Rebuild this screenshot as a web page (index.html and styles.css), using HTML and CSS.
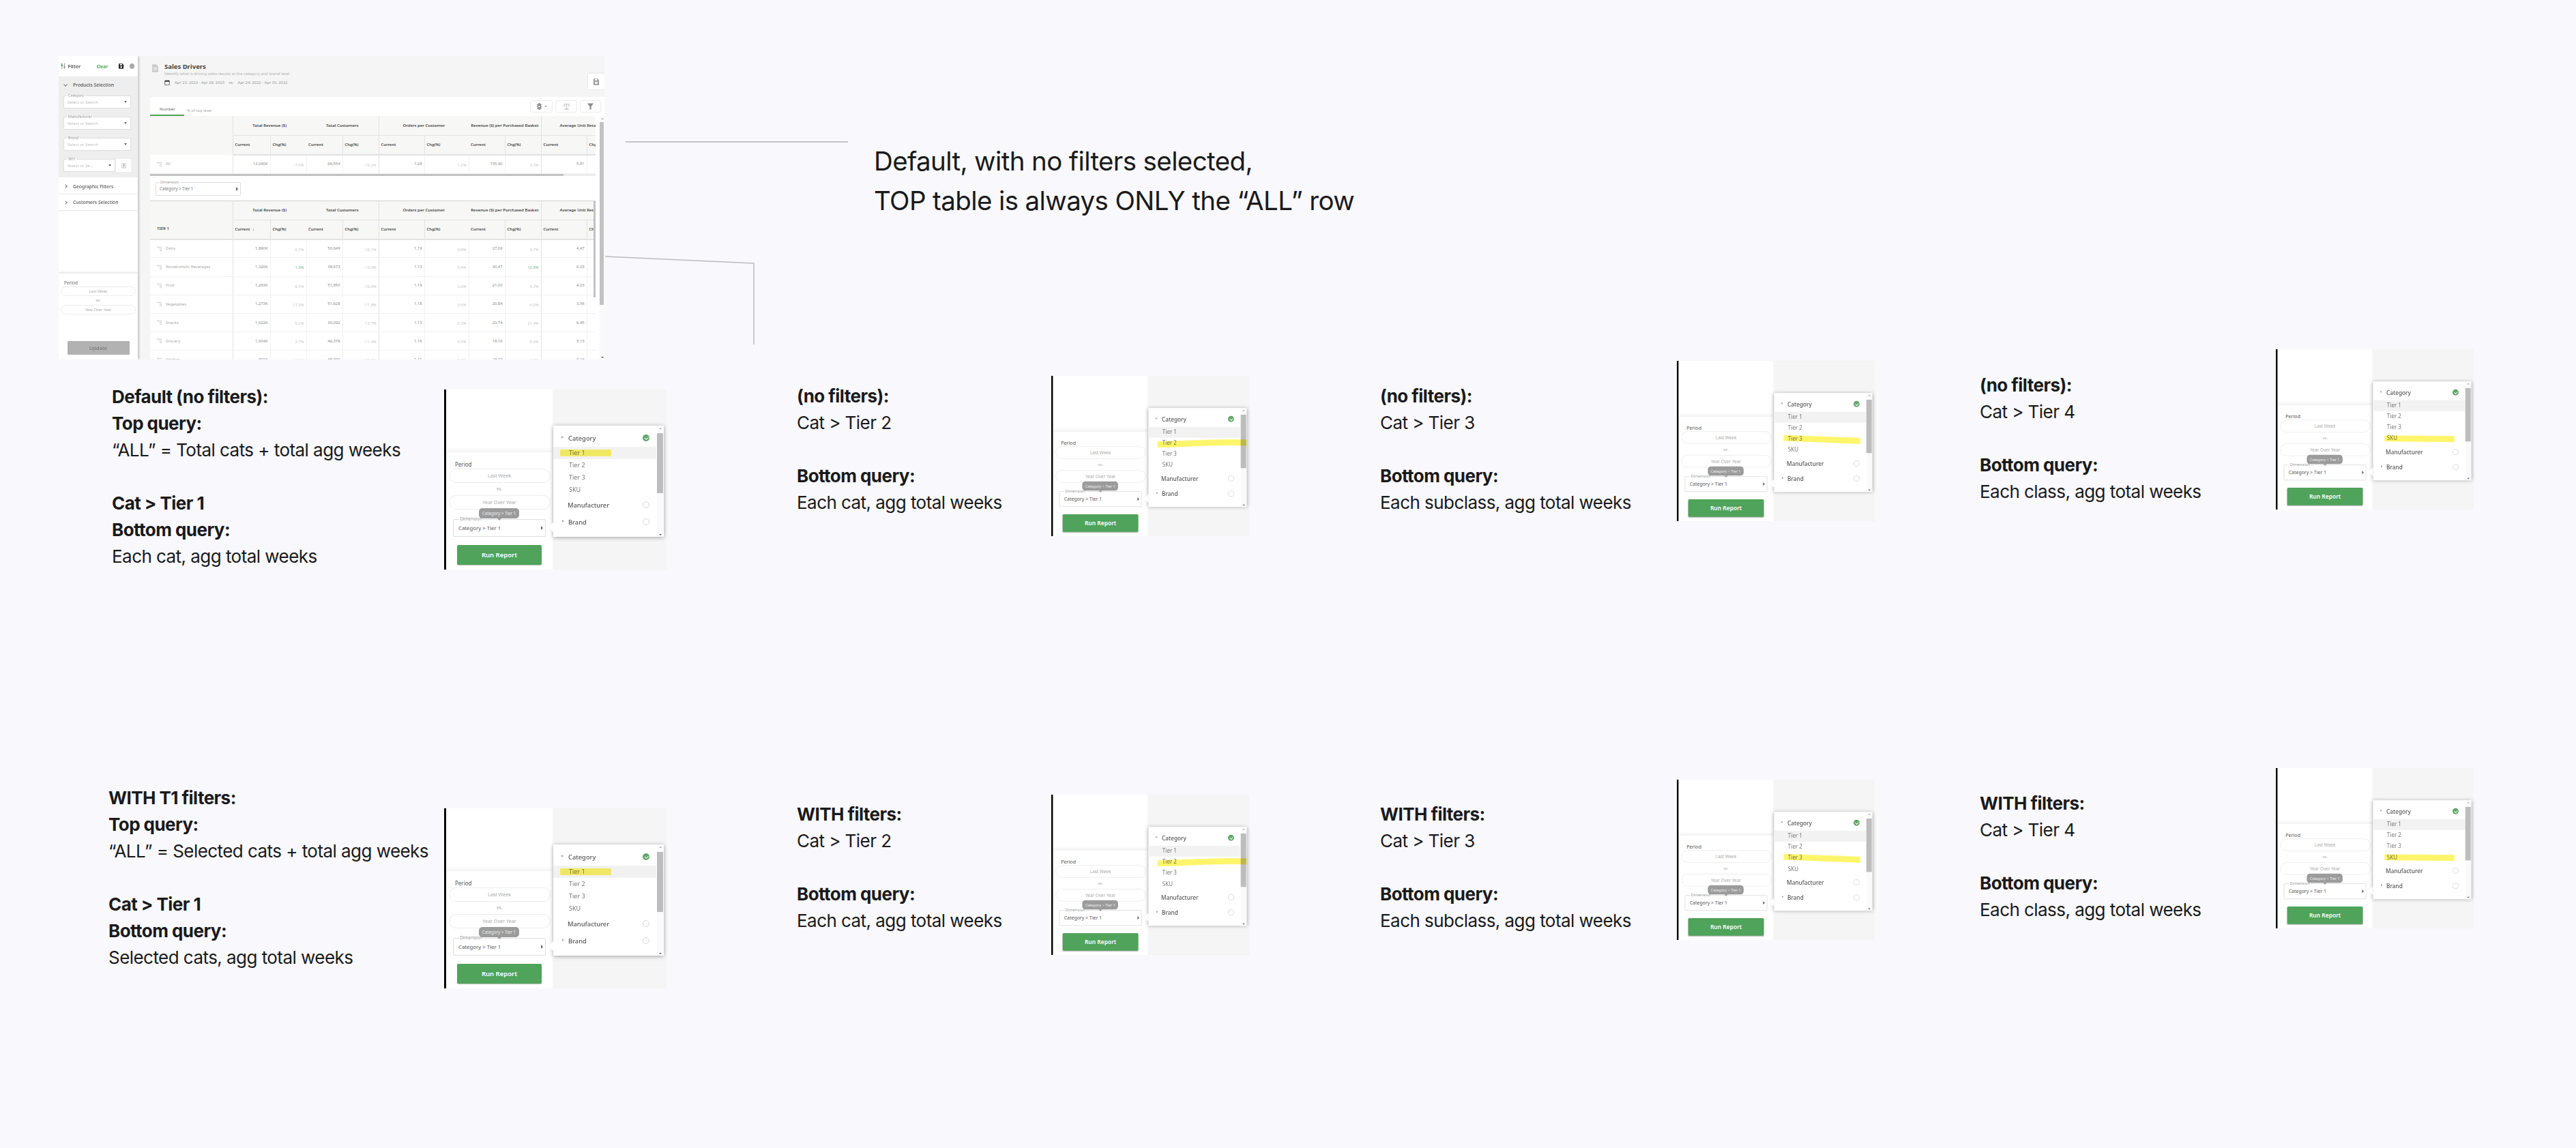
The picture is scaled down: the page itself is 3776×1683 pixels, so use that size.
FILE: index.html
```html
<!DOCTYPE html>
<html lang="en">
<head>
<meta charset="utf-8">
<title>Sales Drivers query notes</title>
<link rel="stylesheet" href="styles.css">
</head>
<body>
<svg class="sprite" width="0" height="0" aria-hidden="true">
  <symbol id="i-tree" viewBox="0 0 12 14"><g fill="#d4d4d4"><rect x="0" y="1" width="3" height="3"/><rect x="4" y="1" width="3" height="3"/><rect x="9" y="1" width="3" height="3"/><rect x="9" y="6" width="3" height="3"/><rect x="9" y="10" width="3" height="3"/></g><path d="M7 3h2M7.500 3v8.500H9M7.500 7.500H9" stroke="#d4d4d4" fill="none"/></symbol>
  <symbol id="i-sliders" viewBox="0 0 12 14"><path d="M3 0v14M9 0v14M0 5h6M6 9h6M0 2h2" stroke="#555" fill="none"/><rect x="1.500" y="3.500" width="3" height="3" fill="#4fa35a"/></symbol>
  <symbol id="i-save" viewBox="0 0 12 12"><path d="M0 1a1 1 0 0 1 1-1h8l3 3v8a1 1 0 0 1-1 1H1a1 1 0 0 1-1-1z" fill="#222"/><rect x="3" y="1" width="5" height="3" fill="#fff"/><circle cx="6" cy="8" r="2" fill="#fff"/></symbol>
  <symbol id="i-doc" viewBox="0 0 12 15"><path d="M0 0h8l4 4v11H0z" fill="#c9c9c9"/><path d="M2 6h8M2 8.500h8M2 11h8" stroke="#fff"/></symbol>
  <symbol id="i-cal" viewBox="0 0 12 12"><path d="M1 2.500h10v9H1z" fill="none" stroke="#222"/><path d="M1 2h10v2H1zM3 0h1v2H3zM8 0h1v2H8z" fill="#222"/></symbol>
  <symbol id="i-gear" viewBox="0 0 12 14"><path d="M4.500 0h3v2.500l2-1 1.500 2-2 1.500 2 1.500v1l-2 1.500 2 1.500-1.500 2-2-1V14h-3v-2.500l-2 1L1 10.500 3 9 1 7.500v-1L3 5 1 3.500l1.500-2 2 1z" fill="#8b8b8b"/><circle cx="6" cy="7" r="1.800" fill="#fff"/></symbol>
  <symbol id="i-scale" viewBox="0 0 14 14"><path d="M7 0v12M1 2h12M3 12h8M1 13.500h12" stroke="#aaa" fill="none"/><path d="M2 2 0 7h4zM12 2l-2 5h4z" fill="none" stroke="#aaa" stroke-width=".7"/></symbol>
  <symbol id="i-funnel" viewBox="0 0 12 12"><path d="M0 0h12L7.500 6v6h-3V6z" fill="#8b8b8b"/></symbol>
  <symbol id="i-export" viewBox="0 0 12 12"><path d="M.500.500h11v11H.500z" fill="none" stroke="#aaa"/><path d="M4 2h4v5H4z" fill="#aaa"/><path d="M2 9h8" stroke="#aaa"/></symbol>
  <symbol id="i-floppy" viewBox="0 0 12 14"><path d="M0 0h9l3 3v11H0z" fill="#9a9a9a"/><rect x="3" y="1" width="5" height="3" fill="#fff"/><rect x="3" y="7" width="6" height="4" fill="#fff"/></symbol>
</svg>

<main class="canvas">
  <section class="shot shot-main">
    <aside class="side">
      <header class="side-head">
        <svg class="ic-sliders"><use href="#i-sliders"/></svg>
        <span class="side-title">Filter</span>
        <span class="side-clear">Clear</span>
        <svg class="ic-save"><use href="#i-save"/></svg>
        <span class="dot"></span>
      </header>
      <div class="side-group">
        <div class="side-row"><span class="chev chev-down"></span>Products Selection</div>
        <div class="fields">
          <div class="field"><span class="legend">Category</span><span class="ph">Select or Search</span><span class="tri"></span></div>
          <div class="field"><span class="legend">Manufacturer</span><span class="ph">Select or Search</span><span class="tri"></span></div>
          <div class="field"><span class="legend">Brand</span><span class="ph">Select or Search</span><span class="tri"></span></div>
          <div class="field-pair">
            <div class="field"><span class="legend">SKU</span><span class="ph">Select or Se...</span><span class="tri"></span></div>
            <div class="field-btn"><svg class="ic-export"><use href="#i-export"/></svg></div>
          </div>
        </div>
      </div>
      <div class="side-row side-card side-geo"><span class="chev"></span>Geographic Filters</div>
      <div class="side-row side-card"><span class="chev"></span>Customers Selection</div>
      <div class="side-foot">
        <div class="period">Period</div>
        <div class="pill">Last Week</div>
        <div class="vs">vs.</div>
        <div class="pill">Year Over Year</div>
        <button class="update">Update</button>
      </div>
    </aside>
    <div class="content">
      <header class="page-head">
        <svg class="ic-doc"><use href="#i-doc"/></svg>
        <div class="page-meta">
          <h1>Sales Drivers</h1>
          <p class="page-sub">Identify what is driving sales results at the category and brand level</p>
          <p class="page-dates"><svg class="ic-cal"><use href="#i-cal"/></svg><span>Apr 23, 2023 - Apr 29, 2023</span><span>vs.</span><span>Apr 24, 2022 - Apr 30, 2022</span></p>
        </div>
        <div class="page-save"><svg class="ic-floppy"><use href="#i-floppy"/></svg></div>
      </header>
      <div class="card">
        <div class="tabbar">
          <span class="tab tab-on">Number</span>
          <span class="tab">% of top level</span>
          <div class="tools">
            <span class="tool tool-gear"><svg class="ic-tool"><use href="#i-gear"/></svg><i class="mini-caret"></i></span>
            <span class="tool"><svg class="ic-tool"><use href="#i-scale"/></svg></span>
            <span class="tool tool-f"><svg class="ic-tool"><use href="#i-funnel"/></svg></span>
          </div>
        </div>
        <div class="card-body">
          <div class="tables">
            <table class="grid">
              <colgroup><col class="c0"><col class="c1"><col class="c2"><col class="c2"><col class="c2"><col class="c3"><col class="c4"><col class="c2"><col class="c2"><col class="c3"><col class="c5"></colgroup>
              <thead>
                <tr class="h1"><th rowspan="2"></th><th colspan="2" class="bl">Total Revenue ($)</th><th colspan="2">Total Customers</th><th colspan="2" class="bl">Orders per Customer</th><th colspan="2">Revenue ($) per Purchased Basket</th><th colspan="2" class="bl aur">Average Unit Retail</th></tr>
                <tr class="h2"><th class="bl">Current</th><th class="bl">Chg(%)</th><th>Current</th><th class="bl">Chg(%)</th><th class="bl">Current</th><th class="bl">Chg(%)</th><th>Current</th><th class="bl">Chg(%)</th><th class="bl">Current</th><th class="bl">Chg</th></tr>
              </thead>
              <tbody>
                <tr><td class="nm"><svg class="ic-tree"><use href="#i-tree"/></svg>All</td><td>13,040K</td><td class="chg">-7.0%</td><td>66,554</td><td class="chg">-18.2%</td><td>1.28</td><td class="chg">1.2%</td><td>155.90</td><td class="chg">3.3%</td><td>5.81</td><td></td></tr>
              </tbody>
            </table>
            <div class="hscroll"><span></span></div>
            <div class="dim-area">
              <div class="dim-field"><span class="legend legend-w">Dimension</span>Category &gt; Tier 1<i class="tri-r"></i></div>
            </div>
            <div class="table2">
              <table class="grid">
                <colgroup><col class="c0"><col class="c1"><col class="c2"><col class="c2"><col class="c2"><col class="c3"><col class="c4"><col class="c2"><col class="c2"><col class="c3"><col class="c5"></colgroup>
                <thead>
                  <tr class="h1"><th rowspan="2" class="tier">TIER 1</th><th colspan="2" class="bl">Total Revenue ($)</th><th colspan="2">Total Customers</th><th colspan="2" class="bl">Orders per Customer</th><th colspan="2">Revenue ($) per Purchased Basket</th><th colspan="2" class="bl aur">Average Unit Retail</th></tr>
                  <tr class="h2"><th class="bl">Current <span class="sort">↓</span></th><th class="bl">Chg(%)</th><th>Current</th><th class="bl">Chg(%)</th><th class="bl">Current</th><th class="bl">Chg(%)</th><th>Current</th><th class="bl">Chg(%)</th><th class="bl">Current</th><th class="bl">Chg</th></tr>
                </thead>
                <tbody>
                  <tr><td class="nm"><svg class="ic-tree"><use href="#i-tree"/></svg>Dairy</td><td>1,890K</td><td class="chg">-0.7%</td><td>50,649</td><td class="chg">-16.1%</td><td>1.19</td><td class="chg">0.8%</td><td>27.09</td><td class="chg">9.7%</td><td>4.47</td><td></td></tr>
                  <tr><td class="nm"><svg class="ic-tree"><use href="#i-tree"/></svg>Nonalcoholic Beverages</td><td>1,320K</td><td class="chg up">1.9%</td><td>38,673</td><td class="chg">-13.0%</td><td>1.13</td><td class="chg">0.4%</td><td>30.47</td><td class="chg up">12.8%</td><td>6.03</td><td></td></tr>
                  <tr><td class="nm"><svg class="ic-tree"><use href="#i-tree"/></svg>Fruit</td><td>1,293K</td><td class="chg">-9.5%</td><td>51,950</td><td class="chg">-18.6%</td><td>1.19</td><td class="chg">0.8%</td><td>21.00</td><td class="chg">8.3%</td><td>4.03</td><td></td></tr>
                  <tr><td class="nm"><svg class="ic-tree"><use href="#i-tree"/></svg>Vegetables</td><td>1,273K</td><td class="chg">17.3%</td><td>51,628</td><td class="chg">-11.8%</td><td>1.18</td><td class="chg">0.6%</td><td>20.84</td><td class="chg">6.0%</td><td>3.56</td><td></td></tr>
                  <tr><td class="nm"><svg class="ic-tree"><use href="#i-tree"/></svg>Snacks</td><td>1,022K</td><td class="chg">5.2%</td><td>30,092</td><td class="chg">-13.7%</td><td>1.13</td><td class="chg">0.3%</td><td>23.74</td><td class="chg">21.4%</td><td>6.45</td><td></td></tr>
                  <tr><td class="nm"><svg class="ic-tree"><use href="#i-tree"/></svg>Grocery</td><td>1,004K</td><td class="chg">3.7%</td><td>46,378</td><td class="chg">-11.3%</td><td>1.16</td><td class="chg">0.5%</td><td>19.16</td><td class="chg">8.0%</td><td>5.13</td><td></td></tr>
                  <tr><td class="nm"><svg class="ic-tree"><use href="#i-tree"/></svg>Kitchen</td><td>991K</td><td class="chg">1.1%</td><td>35,090</td><td class="chg">-12.0%</td><td>1.11</td><td class="chg">0.2%</td><td>23.19</td><td class="chg">4.0%</td><td>9.23</td><td></td></tr>
                </tbody>
              </table>
              <div class="inner-scroll"></div>
            </div>
          </div>
          <div class="vscroll"><i class="arr-up"></i><span></span><i class="arr-down"></i></div>
        </div>
      </div>
    </div>
  </section>

  <div class="rule-h"></div>
  <svg class="rule-bent" width="222" height="132" viewBox="0 0 222 132"><path d="M0 1 218 11V130" fill="none" stroke="#bdbdbd" stroke-width="1.500"/></svg>

  <div class="caption">
    <p>Default, with no filters selected,</p>
    <p>TOP table is always ONLY the “ALL” row</p>
  </div>

  <div class="note n1"><p><strong>Default (no filters):</strong><br><strong>Top query:</strong><br>“ALL” = Total cats + total agg weeks</p><p><strong>Cat &gt; Tier 1</strong><br><strong>Bottom query:</strong><br>Each cat, agg total weeks</p></div>
  <div class="note n2"><p><strong>(no filters):</strong><br>Cat &gt; Tier 2</p><p><strong>Bottom query:</strong><br>Each cat, agg total weeks</p></div>
  <div class="note n3"><p><strong>(no filters):</strong><br>Cat &gt; Tier 3</p><p><strong>Bottom query:</strong><br>Each subclass, agg total weeks</p></div>
  <div class="note n4"><p><strong>(no filters):</strong><br>Cat &gt; Tier 4</p><p><strong>Bottom query:</strong><br>Each class, agg total weeks</p></div>
  <div class="note n5"><p><strong>WITH T1 filters:</strong><br><strong>Top query:</strong><br>“ALL” = Selected cats + total agg weeks</p><p><strong>Cat &gt; Tier 1</strong><br><strong>Bottom query:</strong><br>Selected cats, agg total weeks</p></div>
  <div class="note n6"><p><strong>WITH filters:</strong><br>Cat &gt; Tier 2</p><p><strong>Bottom query:</strong><br>Each cat, agg total weeks</p></div>
  <div class="note n7"><p><strong>WITH filters:</strong><br>Cat &gt; Tier 3</p><p><strong>Bottom query:</strong><br>Each subclass, agg total weeks</p></div>
  <div class="note n8"><p><strong>WITH filters:</strong><br>Cat &gt; Tier 4</p><p><strong>Bottom query:</strong><br>Each class, agg total weeks</p></div>

  <section class="shot thumb p1">
    <div class="t-left"><div class="t-panel"><div class="t-period">Period</div><div class="t-pill">Last Week</div><div class="t-vs">vs.</div><div class="t-pill">Year Over Year</div><div class="t-dim"><span class="t-legend">Dimension</span>Category &gt; Tier 1<i class="tri-r"></i></div><button class="t-run">Run Report</button></div></div>
    <div class="t-right"></div>
    <div class="t-tip">Category &gt; Tier 1</div>
    <div class="popup"><div class="p-head"><i class="p-open"></i><b>Category</b><span class="p-check"></span></div><div class="p-item p-cur">Tier 1</div><div class="p-item">Tier 2</div><div class="p-item">Tier 3</div><div class="p-item">SKU</div><div class="p-sec"><b>Manufacturer</b><span class="p-radio"></span></div><div class="p-sec p-brand"><i class="p-closed"></i><b>Brand</b><span class="p-radio"></span></div><div class="p-scroll"><i class="arr-up"></i><span></span><i class="arr-down"></i></div><span class="hl-t1"></span></div>
  </section>

  <section class="shot thumb thumb-sm p2">
    <div class="t-left"><div class="t-panel"><div class="t-period">Period</div><div class="t-pill">Last Week</div><div class="t-vs">vs.</div><div class="t-pill">Year Over Year</div><div class="t-dim"><span class="t-legend">Dimension</span>Category &gt; Tier 1<i class="tri-r"></i></div><button class="t-run">Run Report</button></div></div>
    <div class="t-right"></div>
    <div class="t-tip">Category &gt; Tier 1</div>
    <div class="popup"><div class="p-head"><i class="p-open"></i><b>Category</b><span class="p-check"></span></div><div class="p-item p-cur">Tier 1</div><div class="p-item">Tier 2</div><div class="p-item">Tier 3</div><div class="p-item">SKU</div><div class="p-sec"><b>Manufacturer</b><span class="p-radio"></span></div><div class="p-sec p-brand"><i class="p-closed"></i><b>Brand</b><span class="p-radio"></span></div><div class="p-scroll"><i class="arr-up"></i><span></span><i class="arr-down"></i></div><svg class="hl" viewBox="0 0 162 163"><path d="M15 60C60 60 100 55 162 57"/></svg></div>
  </section>

  <section class="shot thumb thumb-sm p3">
    <div class="t-left"><div class="t-panel"><div class="t-period">Period</div><div class="t-pill">Last Week</div><div class="t-vs">vs.</div><div class="t-pill">Year Over Year</div><div class="t-dim"><span class="t-legend">Dimension</span>Category &gt; Tier 1<i class="tri-r"></i></div><button class="t-run">Run Report</button></div></div>
    <div class="t-right"></div>
    <div class="t-tip">Category &gt; Tier 1</div>
    <div class="popup"><div class="p-head"><i class="p-open"></i><b>Category</b><span class="p-check"></span></div><div class="p-item p-cur">Tier 1</div><div class="p-item">Tier 2</div><div class="p-item">Tier 3</div><div class="p-item">SKU</div><div class="p-sec"><b>Manufacturer</b><span class="p-radio"></span></div><div class="p-sec p-brand"><i class="p-closed"></i><b>Brand</b><span class="p-radio"></span></div><div class="p-scroll"><i class="arr-up"></i><span></span><i class="arr-down"></i></div><svg class="hl" viewBox="0 0 162 163"><path d="M16 74 142 79"/></svg></div>
  </section>

  <section class="shot thumb thumb-sm p4">
    <div class="t-left"><div class="t-panel"><div class="t-period">Period</div><div class="t-pill">Last Week</div><div class="t-vs">vs.</div><div class="t-pill">Year Over Year</div><div class="t-dim"><span class="t-legend">Dimension</span>Category &gt; Tier 1<i class="tri-r"></i></div><button class="t-run">Run Report</button></div></div>
    <div class="t-right"></div>
    <div class="t-tip">Category &gt; Tier 1</div>
    <div class="popup"><div class="p-head"><i class="p-open"></i><b>Category</b><span class="p-check"></span></div><div class="p-item p-cur">Tier 1</div><div class="p-item">Tier 2</div><div class="p-item">Tier 3</div><div class="p-item">SKU</div><div class="p-sec"><b>Manufacturer</b><span class="p-radio"></span></div><div class="p-sec p-brand"><i class="p-closed"></i><b>Brand</b><span class="p-radio"></span></div><div class="p-scroll"><i class="arr-up"></i><span></span><i class="arr-down"></i></div><svg class="hl" viewBox="0 0 162 163"><path d="M19 94 134 95"/></svg></div>
  </section>

  <section class="shot thumb p5">
    <div class="t-left"><div class="t-panel"><div class="t-period">Period</div><div class="t-pill">Last Week</div><div class="t-vs">vs.</div><div class="t-pill">Year Over Year</div><div class="t-dim"><span class="t-legend">Dimension</span>Category &gt; Tier 1<i class="tri-r"></i></div><button class="t-run">Run Report</button></div></div>
    <div class="t-right"></div>
    <div class="t-tip">Category &gt; Tier 1</div>
    <div class="popup"><div class="p-head"><i class="p-open"></i><b>Category</b><span class="p-check"></span></div><div class="p-item p-cur">Tier 1</div><div class="p-item">Tier 2</div><div class="p-item">Tier 3</div><div class="p-item">SKU</div><div class="p-sec"><b>Manufacturer</b><span class="p-radio"></span></div><div class="p-sec p-brand"><i class="p-closed"></i><b>Brand</b><span class="p-radio"></span></div><div class="p-scroll"><i class="arr-up"></i><span></span><i class="arr-down"></i></div><span class="hl-t1"></span></div>
  </section>

  <section class="shot thumb thumb-sm p6">
    <div class="t-left"><div class="t-panel"><div class="t-period">Period</div><div class="t-pill">Last Week</div><div class="t-vs">vs.</div><div class="t-pill">Year Over Year</div><div class="t-dim"><span class="t-legend">Dimension</span>Category &gt; Tier 1<i class="tri-r"></i></div><button class="t-run">Run Report</button></div></div>
    <div class="t-right"></div>
    <div class="t-tip">Category &gt; Tier 1</div>
    <div class="popup"><div class="p-head"><i class="p-open"></i><b>Category</b><span class="p-check"></span></div><div class="p-item p-cur">Tier 1</div><div class="p-item">Tier 2</div><div class="p-item">Tier 3</div><div class="p-item">SKU</div><div class="p-sec"><b>Manufacturer</b><span class="p-radio"></span></div><div class="p-sec p-brand"><i class="p-closed"></i><b>Brand</b><span class="p-radio"></span></div><div class="p-scroll"><i class="arr-up"></i><span></span><i class="arr-down"></i></div><svg class="hl" viewBox="0 0 162 163"><path d="M15 60C60 60 100 55 162 57"/></svg></div>
  </section>

  <section class="shot thumb thumb-sm p7">
    <div class="t-left"><div class="t-panel"><div class="t-period">Period</div><div class="t-pill">Last Week</div><div class="t-vs">vs.</div><div class="t-pill">Year Over Year</div><div class="t-dim"><span class="t-legend">Dimension</span>Category &gt; Tier 1<i class="tri-r"></i></div><button class="t-run">Run Report</button></div></div>
    <div class="t-right"></div>
    <div class="t-tip">Category &gt; Tier 1</div>
    <div class="popup"><div class="p-head"><i class="p-open"></i><b>Category</b><span class="p-check"></span></div><div class="p-item p-cur">Tier 1</div><div class="p-item">Tier 2</div><div class="p-item">Tier 3</div><div class="p-item">SKU</div><div class="p-sec"><b>Manufacturer</b><span class="p-radio"></span></div><div class="p-sec p-brand"><i class="p-closed"></i><b>Brand</b><span class="p-radio"></span></div><div class="p-scroll"><i class="arr-up"></i><span></span><i class="arr-down"></i></div><svg class="hl" viewBox="0 0 162 163"><path d="M16 74 142 79"/></svg></div>
  </section>

  <section class="shot thumb thumb-sm p8">
    <div class="t-left"><div class="t-panel"><div class="t-period">Period</div><div class="t-pill">Last Week</div><div class="t-vs">vs.</div><div class="t-pill">Year Over Year</div><div class="t-dim"><span class="t-legend">Dimension</span>Category &gt; Tier 1<i class="tri-r"></i></div><button class="t-run">Run Report</button></div></div>
    <div class="t-right"></div>
    <div class="t-tip">Category &gt; Tier 1</div>
    <div class="popup"><div class="p-head"><i class="p-open"></i><b>Category</b><span class="p-check"></span></div><div class="p-item p-cur">Tier 1</div><div class="p-item">Tier 2</div><div class="p-item">Tier 3</div><div class="p-item">SKU</div><div class="p-sec"><b>Manufacturer</b><span class="p-radio"></span></div><div class="p-sec p-brand"><i class="p-closed"></i><b>Brand</b><span class="p-radio"></span></div><div class="p-scroll"><i class="arr-up"></i><span></span><i class="arr-down"></i></div><svg class="hl" viewBox="0 0 162 163"><path d="M19 94 134 95"/></svg></div>
  </section>
</main>
</body>
</html>
```
FILE: styles.css
```css
* { box-sizing: border-box; }
html, body { margin: 0; height: 100%; }
body { background: #f8f8fd; font-family: "Noto Sans", "Open Sans", sans-serif; color: #444; overflow: hidden; }
.sprite { position: absolute; }
p, h1 { margin: 0; }
svg { display: block; }

/* free canvas */
.canvas { position: relative; width: 3776px; height: 1683px; }
.shot { position: absolute; filter: blur(.35px); }

.caption { position: absolute; left: 1281px; top: 207px; font: 400 38.5px/58px Inter, sans-serif; color: #1a1a1a; letter-spacing: -.62px; }
.rule-h { position: absolute; left: 917px; top: 207px; width: 326px; height: 2px; background: #c4c4c4; }
.rule-bent { position: absolute; left: 887px; top: 375px; }

.note { position: absolute; font: 400 26px/39px Inter, sans-serif; color: #1a1a1a; letter-spacing: -.55px; white-space: nowrap; }
.note strong { font-weight: 700; }
.note p + p { margin-top: 39px; }
.n1 { left: 164px; top: 562px; }
.n2 { left: 1168px; top: 561px; }
.n3 { left: 2023px; top: 561px; }
.n4 { left: 2902px; top: 545px; }
.n5 { left: 159px; top: 1150px; }
.n6 { left: 1168px; top: 1174px; }
.n7 { left: 2023px; top: 1174px; }
.n8 { left: 2902px; top: 1158px; }

/* main screenshot */
.shot-main { left: 86px; top: 82px; width: 800px; height: 445px; display: flex; overflow: hidden; }
.side { width: 116px; background: #fff; display: flex; flex-direction: column; box-shadow: 2px 0 3px rgba(0,0,0,.18); position: relative; z-index: 1; }
.side-head { height: 30px; display: flex; align-items: center; padding: 0 5px 0 3px; gap: 3px; box-shadow: 0 1px 2px rgba(0,0,0,.1); }
.ic-sliders { width: 8px; height: 10px; }
.side-title { font-size: 7.5px; font-weight: 600; color: #555; }
.side-clear { font-size: 6.500px; font-weight: 700; color: #4fa35a; margin-left: 20px; }
.ic-save { width: 8px; height: 8px; margin-left: 13px; }
.dot { width: 8px; height: 8px; border-radius: 50%; background: #aaa; margin-left: 5px; }
.side-group { height: 148px; background: #eee; display: flex; flex-direction: column; }
.side-row { height: 24px; flex: none; display: flex; align-items: center; padding-left: 7px; font-size: 6.800px; font-weight: 500; color: #555; }
.chev { width: 4px; height: 4px; border: solid #777; border-width: 0 .7px .7px 0; transform: rotate(-45deg); margin-right: 9px; margin-left: 1px; }
.chev-down { transform: rotate(45deg); }
.side-card { height: 23px; background: #fff; margin-top: 1px; box-shadow: 0 1px 2px rgba(0,0,0,.12); }
.side-geo { height: 22px; margin-top: 2px; }
.fields { display: flex; flex-direction: column; gap: 12px; padding: 4px 10px 0 7px; }
.field { position: relative; height: 19px; background: #fff; border: 1px solid #dedede; border-radius: 2px; display: flex; align-items: center; padding: 0 5px; }
.legend { position: absolute; left: 4px; top: -4px; font-size: 5.400px; line-height: 7px; color: #999; padding: 0 2px; background: linear-gradient(#eee 50%, #fff 50%); }
.legend-w { background: #fff; }
.ph { font-size: 6px; color: #bdbdbd; white-space: nowrap; }
.tri { margin-left: auto; border: 2.500px solid transparent; border-top: 3px solid #666; border-bottom: 0; }
.field-pair { display: flex; gap: 1px; }
.field-pair .field { flex: 1; }
.field-btn { width: 22px; background: #fff; display: flex; align-items: center; justify-content: center; }
.ic-export { width: 7px; height: 8px; }
.side-foot { margin-top: auto; height: 126px; box-shadow: 0 -2px 3px rgba(0,0,0,.1); display: flex; flex-direction: column; align-items: center; padding-top: 9px; }
.period { align-self: flex-start; margin-left: 8px; font-size: 6.500px; line-height: 10px; color: #666; }
.pill { width: 110px; height: 14px; border: 1px solid #ececec; border-radius: 7px; text-align: center; font-size: 5.600px; line-height: 12px; color: #aaa; }
.vs { font-size: 5.500px; line-height: 13px; color: #999; }
.update { margin-top: 39px; width: 91px; height: 20px; border: 0; background: #b2b2b2; border-radius: 1px; font: 500 7.500px "Noto Sans", sans-serif; color: #777; }

.content { flex: 1; background: #f5f5f5; padding-left: 18px; display: flex; flex-direction: column; min-width: 0; }
.page-head { height: 60px; flex: none; display: flex; padding-top: 10px; margin-left: 3px; }
.ic-doc { width: 9px; height: 12px; margin: 2px 9px 0 0; }
.page-meta { flex: 1; }
.page-meta h1 { font-size: 9.500px; line-height: 12px; font-weight: 700; color: #444; }
.page-sub { font-size: 5.800px; line-height: 8px; color: #b4b4b4; white-space: nowrap; }
.page-dates { display: flex; align-items: center; gap: 6px; margin-top: 4px; font-size: 5.800px; line-height: 10px; color: #999; white-space: nowrap; padding-left: 0; }
.ic-cal { width: 8px; height: 8px; margin-right: 1px; }
.page-save { width: 24px; height: 23px; margin-top: 16px; background: #fff; display: flex; align-items: center; justify-content: center; box-shadow: 0 0 2px rgba(0,0,0,.15); border-radius: 1px; }
.ic-floppy { width: 8px; height: 10px; }

.card { flex: 1; background: #fff; display: flex; flex-direction: column; min-height: 0; }
.tabbar { height: 28px; flex: none; display: flex; align-items: flex-end; position: relative; font-size: 5.800px; color: #aaa; }
.tab { line-height: 8px; padding: 0 3px 4px; }
.tab-on { width: 50px; padding: 0 0 4px 14px; color: #666; border-bottom: 2px solid #4fa35a; height: 14px; line-height: 8px; }
.tab + .tab { margin-left: 1px; }
.tools { margin-left: auto; display: flex; gap: 4px; align-self: center; padding-right: 5px; }
.tool { width: 32px; height: 18px; border: 1px solid #ececec; border-radius: 3px; display: flex; align-items: center; justify-content: center; gap: 3px; }
.tool-f { width: 31px; }
.tool-gear { width: 33px; }
.ic-tool { width: 9px; height: 10px; }
.mini-caret { border: 2px solid transparent; border-top: 2.500px solid #999; border-bottom: 0; }

.card-body { flex: 1; display: flex; min-height: 0; }
.tables { width: 653px; flex: none; display: flex; flex-direction: column; overflow: hidden; }
.grid { width: 653px; table-layout: fixed; border-collapse: collapse; font-size: 5.800px; }
.c0 { width: 121px; } .c1 { width: 55px; } .c2 { width: 53px; } .c3 { width: 67px; } .c4 { width: 65px; } .c5 { width: 13px; }
.grid th { background: #f7f7f5; font-weight: 600; color: #444; padding: 0; white-space: nowrap; overflow: hidden; }
.h1 th { height: 28px; font-size: 6px; }
.h2 th { height: 29px; border-top: 1px solid #e2e2e2; border-bottom: 2px solid #e2e2e2; text-align: left; padding-left: 3px; }
.table2 .h2 th { height: 28px; }
.grid .aur { text-align: left; padding-left: 27px; }
.grid .bl { border-left: 1px solid #e2e2e2; }
.grid .tier { text-align: left; vertical-align: bottom; padding: 0 0 11px 10px; border-bottom: 2px solid #e2e2e2; }
.sort { color: #777; font-weight: 400; font-size: 7px; line-height: 6px; margin-left: 2px; }
.grid td { height: 27.200px; text-align: right; padding: 0 3px 1px 0; color: #888; border-bottom: 1px solid #f1f1f1; border-left: 1px solid #f1f1f1; white-space: nowrap; overflow: hidden; }
.grid td:first-child { border-left: 0; }
.grid td:nth-child(2), .grid td:nth-child(6), .grid td:nth-child(10) { border-left-color: #e2e2e2; }
.grid .nm { text-align: left; padding: 0 0 0 10px; color: #a8a8a8; }
.grid td:first-child + td { border-left-color: #e2e2e2; }
.grid .chg { padding-top: 3px; color: #c8c8c8; }
.grid .up { color: #7cb487; }
.ic-tree { display: inline-block; vertical-align: middle; width: 7px; height: 8px; margin-right: 6px; }
.hscroll { height: 3px; flex: none; background: #eee; }
.hscroll span { display: block; height: 3px; width: 606px; background: #c2c2c2; }
.dim-area { height: 36px; flex: none; padding: 9px 0 0 8px; }
.dim-field { position: relative; width: 125px; height: 20px; border: 1px solid #dcdcdc; border-radius: 2px; font-size: 6.200px; line-height: 18px; padding-left: 5px; color: #777; }
.tri-r { position: absolute; right: 3px; top: 50%; margin-top: -3px; border: 3px solid transparent; border-left: 3px solid #666; border-right: 0; }
.table2 { flex: 1; min-height: 0; position: relative; overflow: hidden; border-top: 1px solid #cfcfcf; }
.inner-scroll { position: absolute; right: 0; top: 0; width: 3px; height: 141px; background: #c2c2c2; }
.vscroll { flex: 1; position: relative; background: #fafafa; margin-left: 6px; }
.vscroll span { position: absolute; left: 0; right: 1px; top: 9px; height: 268px; background: #c2c2c2; }
.arr-up { position: absolute; left: 50%; margin-left: -2px; top: 3px; border: 2px solid transparent; border-bottom: 2.500px solid #aaa; border-top: 0; }
.arr-down { position: absolute; left: 50%; margin-left: -2px; bottom: 2px; border: 2px solid transparent; border-top: 2.500px solid #555; border-bottom: 0; }

/* small thumbnails */
.thumb { width: 326px; height: 264px; border-left: 3px solid #000; display: flex; transform-origin: 0 0; }
.thumb-sm { transform: scale(.89); }
.p1 { left: 651px; top: 571px; }
.p2 { left: 1541px; top: 551px; }
.p3 { left: 2458px; top: 529px; }
.p4 { left: 3336px; top: 512px; }
.p5 { left: 651px; top: 1185px; }
.p6 { left: 1541px; top: 1165px; }
.p7 { left: 2458px; top: 1143px; }
.p8 { left: 3336px; top: 1126px; }
.t-left { width: 156px; background: #fff; padding-top: 92px; }
.t-right { flex: 1; background: #f5f5f5; }
.t-panel { height: 172px; box-shadow: 0 -3px 5px rgba(0,0,0,.06); display: flex; flex-direction: column; align-items: center; padding-top: 11px; }
.t-period { align-self: flex-start; margin-left: 13px; font-size: 8px; line-height: 13px; color: #555; }
.t-pill { width: 149px; height: 21px; border: 1px solid #ededed; border-radius: 11px; text-align: center; font-size: 7.200px; line-height: 19px; color: #aaa; }
.t-vs { font-size: 6.800px; line-height: 18px; color: #aaa; }
.t-dim { position: relative; width: 136px; height: 26px; margin-top: 14px; border: 1px solid #dedede; border-radius: 2px; font-size: 7.800px; line-height: 24px; padding-left: 7px; color: #555; }
.t-legend { position: absolute; left: 8px; top: -5px; font-size: 6.500px; line-height: 8px; padding: 0 1px; color: #999; background: #fff; }
.t-run { width: 124px; height: 29px; margin-top: 12px; border: 0; border-radius: 2px; background: #4fa35a; color: #fff; font: 600 9.500px "Noto Sans", sans-serif; box-shadow: 0 1px 1px rgba(0,0,0,.25); }
.t-tip { position: absolute; left: 48px; top: 174px; width: 59px; height: 15px; border-radius: 5px; background: #9b9b9b; color: #eee; font-size: 6.200px; line-height: 15px; text-align: center; white-space: nowrap; }
.t-tip::after { content: ""; position: absolute; left: 50%; margin-left: -3px; bottom: -3px; border: 3px solid transparent; border-top: 3px solid #9b9b9b; border-bottom: 0; }
.popup { position: absolute; left: 157px; top: 53px; width: 162px; height: 163px; background: #fff; box-shadow: 0 1px 6px rgba(0,0,0,.35); font-size: 9px; color: #777; }
.popup::before { content: ""; position: absolute; left: -7px; top: 142px; border: 7px solid transparent; border-right: 7px solid #fff; border-left: 0; }
.p-head, .p-sec { display: flex; align-items: center; color: #555; position: relative; }
.p-head { height: 31px; padding: 5px 0 0 22px; }
.p-head b, .p-sec b { font-weight: 500; font-size: 9.300px; white-space: nowrap; }
.p-item { height: 18px; line-height: 18px; padding-left: 23px; width: 151px; }
.p-cur { background: #f2f2f2; }
.p-sec { height: 26px; padding-left: 21px; }
.p-brand { height: 24px; padding-left: 22px; }
.p-open { position: absolute; left: 11px; top: 16px; border: 2.500px solid transparent; border-top: 3px solid #aaa; border-bottom: 0; }
.p-closed { position: absolute; left: 13px; top: 9px; border: 2.500px solid transparent; border-left: 3px solid #aaa; border-right: 0; }
.p-check { position: absolute; left: 131px; top: 13px; width: 10px; height: 10px; border-radius: 50%; background: #5fa768; }
.p-check::after { content: ""; position: absolute; left: 3px; top: 2.500px; width: 4px; height: 2.500px; border: solid #fff; border-width: 0 0 1px 1px; transform: rotate(-45deg); }
.p-radio { position: absolute; left: 131px; top: 50%; margin-top: -5px; width: 10px; height: 10px; border-radius: 50%; border: 1px solid #d8d8d8; }
.p-scroll { position: absolute; right: 1px; top: 0; bottom: 0; width: 9px; background: #fafafa; }
.p-scroll span { position: absolute; left: 0; right: 0; top: 11px; height: 88px; background: #bdbdbd; }
.hl { position: absolute; left: 0; top: 0; width: 162px; height: 163px; overflow: visible; mix-blend-mode: multiply; }
.hl path { fill: none; stroke: #fdf56a; stroke-width: 10; stroke-linejoin: round; }
.hl-t1 { position: absolute; left: 10px; top: 35px; width: 75px; height: 10px; border-radius: 2px; background: #fdf56a; mix-blend-mode: multiply; }
```
